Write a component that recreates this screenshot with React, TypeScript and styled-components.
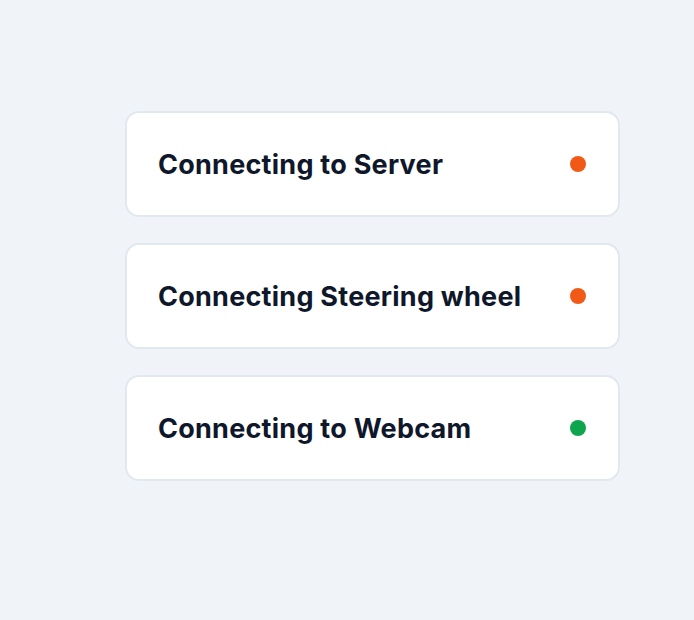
import React from "react";
import styled, { createGlobalStyle } from "styled-components";

const Global = createGlobalStyle`
  html, body { margin: 0; padding: 0; background: #f0f4f9; }
  body { font-family: Inter, "Noto Sans", sans-serif; }
`;

const Page = styled.main`
  min-height: 620px;
  box-sizing: border-box;
  padding: 111px 0 0 125px;
`;

const List = styled.div`
  display: flex;
  flex-direction: column;
  gap: 26px;
  width: 495px;
`;

const Card = styled.div`
  box-sizing: border-box;
  height: 106px;
  display: flex;
  align-items: center;
  justify-content: space-between;
  padding: 0 32px 0 31px;
  background: #ffffff;
  border: 2px solid #e2e8f0;
  border-radius: 14px;
`;

const Label = styled.span`
  font-size: 27px;
  font-weight: 700;
  letter-spacing: 0.25px;
  color: #0f172a;
`;

const Dot = styled.span<{ $color: string }>`
  width: 16px;
  height: 16px;
  border-radius: 50%;
  background: ${(p) => p.$color};
`;

const items = [
  { label: "Connecting to Server", color: "#f15a16" },
  { label: "Connecting Steering wheel", color: "#f15a16" },
  { label: "Connecting to Webcam", color: "#0fa44e" },
];

export default function App() {
  return (
    <>
      <Global />
      <Page>
        <List>
          {items.map((it) => (
            <Card key={it.label}>
              <Label>{it.label}</Label>
              <Dot $color={it.color} />
            </Card>
          ))}
        </List>
      </Page>
    </>
  );
}
